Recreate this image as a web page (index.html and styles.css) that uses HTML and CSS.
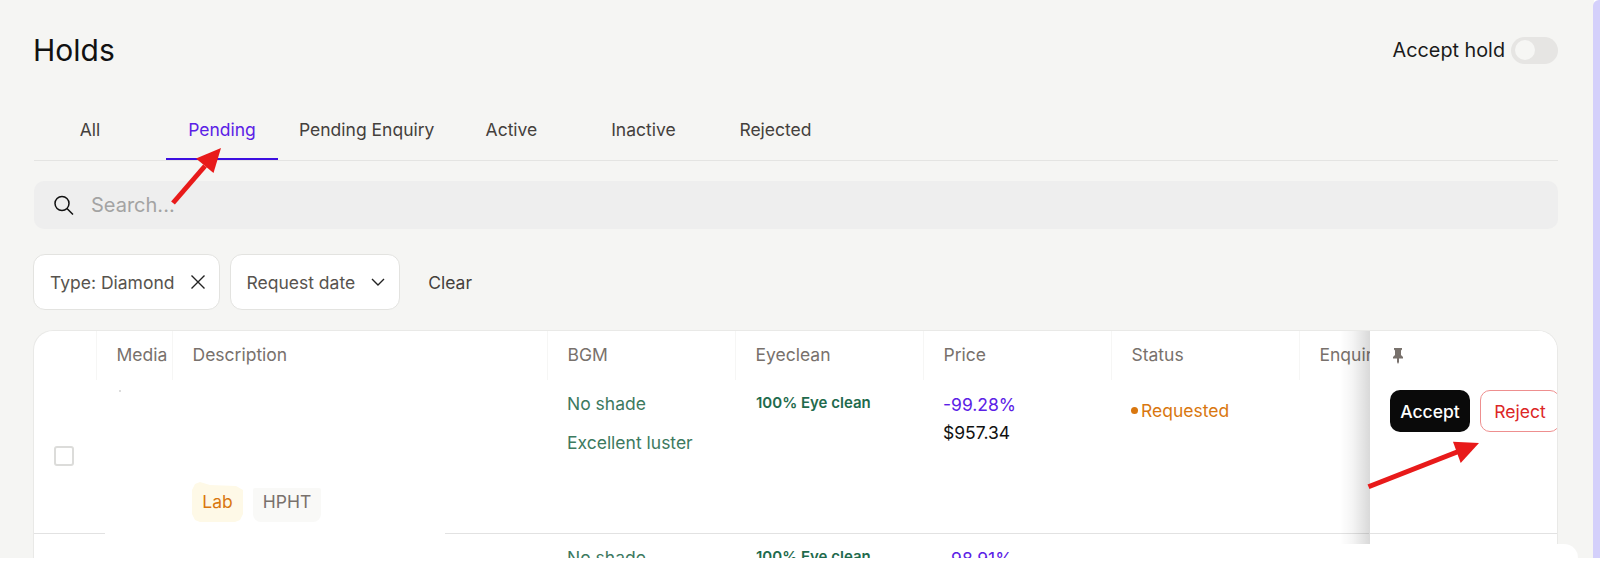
FILE: index.html
```html
<!DOCTYPE html>
<html lang="en">
<head>
<meta charset="utf-8">
<title>Holds</title>
<link rel="stylesheet" href="styles.css">
</head>
<body>
<div class="app">
  <main class="main">
    <header class="top">
      <h1 class="title">Holds</h1>
      <div class="accept">
        <span>Accept hold</span>
        <span class="toggle"><span class="knob"></span></span>
      </div>
    </header>
    <nav class="tabs">
      <a class="tab">All</a>
      <a class="tab active">Pending</a>
      <a class="tab">Pending Enquiry</a>
      <a class="tab">Active</a>
      <a class="tab">Inactive</a>
      <a class="tab">Rejected</a>
    </nav>
    <div class="search">
      <svg class="search-icon" width="20" height="20" viewBox="0 0 20 20" fill="none" stroke="#111" stroke-width="1.5"><circle cx="8" cy="8.5" r="7"/><path d="M13 13.5l6 6"/></svg>
      <span class="placeholder">Search...</span>
    </div>
    <div class="filters">
      <div class="chip">
        <span>Type: Diamond</span>
        <svg width="14" height="14" viewBox="0 0 14 14" fill="none" stroke="#222" stroke-width="1.4"><path d="M.5.5l13 13M13.5.5l-13 13"/></svg>
      </div>
      <div class="chip">
        <span>Request date</span>
        <svg width="14" height="8" viewBox="0 0 14 8" fill="none" stroke="#222" stroke-width="1.4"><path d="M1 1l6 6 6-6"/></svg>
      </div>
      <span class="clear">Clear</span>
    </div>
    <section class="card">
      <div class="scroll">
        <div class="row head">
          <div class="hcell"></div>
          <div class="hcell">Media</div>
          <div class="hcell">Description</div>
          <div class="hcell">BGM</div>
          <div class="hcell">Eyeclean</div>
          <div class="hcell">Price</div>
          <div class="hcell">Status</div>
          <div class="hcell">Enquiry</div>
        </div>
        <div class="row body">
          <div class="cell check"><span class="checkbox"></span></div>
          <div class="cell media"><span class="speck"></span></div>
          <div class="cell desc">
            <span class="tag lab">Lab</span>
            <span class="tag hpht">HPHT</span>
          </div>
          <div class="cell bgm"><span>No shade</span><span>Excellent luster</span></div>
          <div class="cell eye">100% Eye clean</div>
          <div class="cell price"><span class="pct">-99.28%</span><span class="amt">$957.34</span></div>
          <div class="cell status"><span class="dot"></span>Requested</div>
          <div class="cell"></div>
        </div>
        <div class="row body second">
          <div class="cell check"></div>
          <div class="cell media"></div>
          <div class="cell desc"></div>
          <div class="cell bgm"><span>No shade</span><span>Excellent luster</span></div>
          <div class="cell eye">100% Eye clean</div>
          <div class="cell price"><span class="pct">-98.91%</span><span class="amt">$957.34</span></div>
          <div class="cell status"><span class="dot"></span>Requested</div>
          <div class="cell"></div>
        </div>
      </div>
      <div class="pinned">
        <div class="pin-head">
          <svg width="12" height="16" viewBox="0 0 12 16" fill="#78716c"><path d="M2 0h8v1.400L9 2.400V7l2 2v1.600H7V14l-1 2-1-2v-3.400H1V9l2-2V2.400L2 1.400z"/></svg>
        </div>
        <div class="pin-row">
          <button class="btn accept-btn">Accept</button>
          <button class="btn reject-btn">Reject</button>
        </div>
      </div>
    </section>
  </main>
  <aside class="strip"></aside>
  <div class="patch patch-desc"></div>
  <div class="patch patch-right"></div>
  <svg class="arrows" width="1600" height="569" viewBox="0 0 1600 569" fill="#e81a1a" stroke="none">
    <path d="M171.100 201.400L203.100 164.400L206.900 167.600L174.900 204.600z"/>
    <path d="M221 148L196 158.500L213.500 173z"/>
    <path d="M1367.500 484.500L1458 449L1460 453.600L1369.500 489z"/>
    <path d="M1479 443L1453 441.700L1460.700 463z"/>
  </svg>
</div>
</body>
</html>
```
FILE: styles.css
```css
* { box-sizing: border-box; }
html, body { margin: 0; padding: 0; background: #fff; }
body { font-family: Inter, "Liberation Sans", sans-serif; color: #111; }
.app { position: relative; display: flex; width: 1600px; height: 569px; overflow: hidden; background: #fff; }
.main { flex: 1; height: 558px; overflow: hidden; display: flex; flex-direction: column; padding: 0 35px 0 34px; background: #f5f5f3; }
.strip { width: 7px; height: 558px; background: #d4d0fb; border-top-left-radius: 6px; box-shadow: -6px 0 0 #f5f5f3; }

.top { flex: none; height: 100px; display: flex; justify-content: space-between; align-items: center; }
.title { margin: 0 0 0 -1px; font-size: 30px; font-weight: 400; color: #111; }
.accept { display: flex; align-items: center; gap: 6px; font-size: 19.8px; color: #1a1a1a; }
.toggle { display: flex; align-items: center; width: 47px; height: 27px; padding-left: 4px; border-radius: 14px; background: #e6e5e3; }
.knob { width: 20px; height: 20px; border-radius: 50%; background: #f6f6f4; }

.tabs { flex: none; height: 61px; display: flex; gap: 20px; border-bottom: 1px solid #e4e4e2; margin-bottom: 20px; }
.tab { display: flex; align-items: center; justify-content: center; min-width: 112px; height: 60px; padding: 0 1px 1px; font-size: 17.5px; color: #44403c; }
.tab.active { color: #5b21e6; border-bottom: 2px solid #3d0fe0; padding-bottom: 0; }

.search { flex: none; height: 48px; display: flex; align-items: center; gap: 17px; padding-left: 20px; border-radius: 10px; background: #eeeeee; margin-bottom: 25px; }
.search-icon { flex: none; }
.placeholder { font-size: 20px; color: #a3a3a3; }

.filters { flex: none; height: 56px; display: flex; align-items: center; gap: 10px; margin: 0 0 20px -1px; }
.chip { height: 56px; display: flex; align-items: center; gap: 16px; padding: 0 14px 0 16px; border: 1px solid #e3e3e0; border-radius: 12px; background: #fff; font-size: 17.5px; color: #57534e; }
.clear { margin-left: 18px; font-size: 17.5px; color: #44403c; }

.card { flex: none; height: 240px; display: flex; margin-left: -1px; border: 1px solid #e9e9e7; border-bottom: 0; border-radius: 20px 20px 0 0; background: #fff; overflow: hidden; }
.scroll { flex: 1; min-width: 0; overflow: hidden; }
.row { display: grid; grid-template-columns: 62px 76px 375px 188px 188px 188px 188px 188px; width: 1300px; }
.head { height: 49px; }
.hcell { display: flex; align-items: center; padding: 0 0 3px 19.5px; border-left: 1px solid #f6f6f5; font-size: 17.5px; color: #78716c; white-space: nowrap; }
.hcell:first-child { border-left: 0; }
.body { height: 154px; border-bottom: 1px solid #e2e2e2; width: 1335px; }
.second { border-bottom: 0; }
.cell { padding-left: 20px; font-size: 17.5px; white-space: nowrap; }
.check { display: flex; align-items: center; justify-content: center; padding: 0 3px 2px 0; }
.checkbox { width: 20px; height: 20px; border: 2px solid #dcdcda; border-radius: 3px; background: #fff; }
.media { padding-top: 10px; }
.speck { display: block; width: 2px; height: 2px; margin-left: 3px; background: #ddd; }
.desc { display: flex; align-items: flex-end; gap: 10px; padding-bottom: 11px; }
.tag { display: flex; align-items: center; justify-content: center; font-size: 17.5px; }
.lab { width: 51px; height: 40px; padding-bottom: 1px; color: #d9770f; background: #fef9e7; clip-path: polygon(0 8px, 3px 2px, 8px 0, 18px 3px, 44px 4px, 51px 8px, 51px 32px, 48px 38px, 43px 40px, 8px 40px, 3px 38px, 0 32px); }
.hpht { width: 68px; height: 34px; padding-bottom: 7px; color: #78716c; background: #f9f9f7; border-radius: 2px 2px 8px 8px; }
.bgm { display: flex; flex-direction: column; gap: 15px; padding-top: 12px; color: #3d7a5f; line-height: 24px; }
.eye { padding-left: 21px; padding-top: 13px; font-size: 15px; font-weight: 600; line-height: 20px; color: #1f6b4d; }
.price { display: flex; flex-direction: column; gap: 4px; padding-top: 13px; line-height: 24px; }
.pct { color: #5b21e6; }
.amt { color: #111; }
.status { display: flex; align-items: center; gap: 3px; height: 24px; margin-top: 18px; color: #d9770f; }
.dot { width: 7px; height: 7px; border-radius: 50%; background: #d9770f; }

.pinned { position: relative; flex: none; width: 187px; background: #fff; }
.pinned::before { content: ""; position: absolute; top: 0; left: -30px; bottom: 0; width: 30px; background: linear-gradient(to right, rgba(0,0,0,0), rgba(0,0,0,0.04) 40%, rgba(0,0,0,0.15)); }
.pin-head { height: 49px; display: flex; align-items: center; padding-left: 22px; }
.pin-row { height: 154px; display: flex; align-items: flex-start; gap: 10px; padding: 10px 0 0 20px; border-bottom: 1px solid #e2e2e2; }
.btn { flex: none; height: 42px; border-radius: 10px; font-family: inherit; font-size: 17.5px; }
.accept-btn { width: 80px; border: 0; background: #0a0a0a; color: #fff; font-weight: 500; }
.reject-btn { width: 80px; margin-right: -3px; border: 1px solid #ee8f8f; background: #fff; color: #dc2626; }

.patch { position: absolute; }
.patch-desc { left: 105px; top: 525px; width: 340px; height: 33px; background: #fff; }
.patch-right { left: 1155px; top: 544px; width: 423px; height: 14px; border-top-right-radius: 18px; background: linear-gradient(to right, rgba(255,255,255,0.9), #fff 60px); }
.arrows { position: absolute; left: 0; top: 0; pointer-events: none; }
```
